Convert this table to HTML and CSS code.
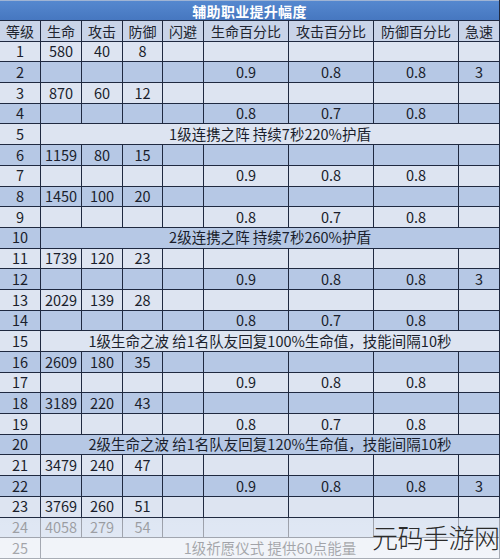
FILE: index.html
```html
<!DOCTYPE html>
<html lang="zh-CN">
<head>
<meta charset="utf-8">
<title>辅助职业提升幅度</title>
<link rel="stylesheet" href="styles.css">
</head>
<body>
<div class="page">
  <div class="sheet">
    <div class="title">辅助职业提升幅度</div>
    <div class="row hd"><div class="c">等级</div><div class="c">生命</div><div class="c">攻击</div><div class="c">防御</div><div class="c">闪避</div><div class="c">生命百分比</div><div class="c">攻击百分比</div><div class="c">防御百分比</div><div class="c">急速</div></div>
    <div class="row l"><div class="c">1</div><div class="c">580</div><div class="c">40</div><div class="c">8</div><div class="c"></div><div class="c"></div><div class="c"></div><div class="c"></div><div class="c"></div></div>
    <div class="row d"><div class="c">2</div><div class="c"></div><div class="c"></div><div class="c"></div><div class="c"></div><div class="c">0.9</div><div class="c">0.8</div><div class="c">0.8</div><div class="c">3</div></div>
    <div class="row l"><div class="c">3</div><div class="c">870</div><div class="c">60</div><div class="c">12</div><div class="c"></div><div class="c"></div><div class="c"></div><div class="c"></div><div class="c"></div></div>
    <div class="row d"><div class="c">4</div><div class="c"></div><div class="c"></div><div class="c"></div><div class="c"></div><div class="c">0.8</div><div class="c">0.7</div><div class="c">0.8</div><div class="c"></div></div>
    <div class="row l"><div class="c">5</div><div class="c span">1级连携之阵 持续7秒220%护盾</div></div>
    <div class="row d"><div class="c">6</div><div class="c">1159</div><div class="c">80</div><div class="c">15</div><div class="c"></div><div class="c"></div><div class="c"></div><div class="c"></div><div class="c"></div></div>
    <div class="row l"><div class="c">7</div><div class="c"></div><div class="c"></div><div class="c"></div><div class="c"></div><div class="c">0.9</div><div class="c">0.8</div><div class="c">0.8</div><div class="c"></div></div>
    <div class="row d"><div class="c">8</div><div class="c">1450</div><div class="c">100</div><div class="c">20</div><div class="c"></div><div class="c"></div><div class="c"></div><div class="c"></div><div class="c"></div></div>
    <div class="row l"><div class="c">9</div><div class="c"></div><div class="c"></div><div class="c"></div><div class="c"></div><div class="c">0.8</div><div class="c">0.7</div><div class="c">0.8</div><div class="c"></div></div>
    <div class="row d"><div class="c">10</div><div class="c span">2级连携之阵 持续7秒260%护盾</div></div>
    <div class="row l"><div class="c">11</div><div class="c">1739</div><div class="c">120</div><div class="c">23</div><div class="c"></div><div class="c"></div><div class="c"></div><div class="c"></div><div class="c"></div></div>
    <div class="row d"><div class="c">12</div><div class="c"></div><div class="c"></div><div class="c"></div><div class="c"></div><div class="c">0.9</div><div class="c">0.8</div><div class="c">0.8</div><div class="c">3</div></div>
    <div class="row l"><div class="c">13</div><div class="c">2029</div><div class="c">139</div><div class="c">28</div><div class="c"></div><div class="c"></div><div class="c"></div><div class="c"></div><div class="c"></div></div>
    <div class="row d"><div class="c">14</div><div class="c"></div><div class="c"></div><div class="c"></div><div class="c"></div><div class="c">0.8</div><div class="c">0.7</div><div class="c">0.8</div><div class="c"></div></div>
    <div class="row l"><div class="c">15</div><div class="c span">1级生命之波 给1名队友回复100%生命值，技能间隔10秒</div></div>
    <div class="row d"><div class="c">16</div><div class="c">2609</div><div class="c">180</div><div class="c">35</div><div class="c"></div><div class="c"></div><div class="c"></div><div class="c"></div><div class="c"></div></div>
    <div class="row l"><div class="c">17</div><div class="c"></div><div class="c"></div><div class="c"></div><div class="c"></div><div class="c">0.9</div><div class="c">0.8</div><div class="c">0.8</div><div class="c"></div></div>
    <div class="row d"><div class="c">18</div><div class="c">3189</div><div class="c">220</div><div class="c">43</div><div class="c"></div><div class="c"></div><div class="c"></div><div class="c"></div><div class="c"></div></div>
    <div class="row l"><div class="c">19</div><div class="c"></div><div class="c"></div><div class="c"></div><div class="c"></div><div class="c">0.8</div><div class="c">0.7</div><div class="c">0.8</div><div class="c"></div></div>
    <div class="row d"><div class="c">20</div><div class="c span">2级生命之波 给1名队友回复120%生命值，技能间隔10秒</div></div>
    <div class="row l"><div class="c">21</div><div class="c">3479</div><div class="c">240</div><div class="c">47</div><div class="c"></div><div class="c"></div><div class="c"></div><div class="c"></div><div class="c"></div></div>
    <div class="row d"><div class="c">22</div><div class="c"></div><div class="c"></div><div class="c"></div><div class="c"></div><div class="c">0.9</div><div class="c">0.8</div><div class="c">0.8</div><div class="c">3</div></div>
    <div class="row l"><div class="c">23</div><div class="c">3769</div><div class="c">260</div><div class="c">51</div><div class="c"></div><div class="c"></div><div class="c"></div><div class="c"></div><div class="c"></div></div>
    <div class="row d"><div class="c">24</div><div class="c">4058</div><div class="c">279</div><div class="c">54</div><div class="c"></div><div class="c"></div><div class="c"></div><div class="c"></div><div class="c"></div></div>
    <div class="row l"><div class="c">25</div><div class="c span">1级祈愿仪式 提供60点能量</div></div>
  </div>
  <div class="fade"></div>
  <div class="mark">元码手游网</div>
</div>
</body>
</html>
```

FILE: styles.css
```css
html, body {
  margin: 0;
  padding: 0;
  background: #ffffff;
}

.page {
  position: relative;
  width: 500px;
  height: 560px;
  overflow: hidden;
  font-family: "Noto Sans CJK SC", "Noto Sans", sans-serif;
}

.sheet {
  display: grid;
  grid-template-columns: 40px 40px 40px 39px 40px 84px 84px 84px 40px;
  grid-template-rows: 20px repeat(26, 19.7px);
  column-gap: 1px;
  row-gap: 1px;
  padding-right: 1px;
  padding-bottom: 1px;
  background: #1f2940;
  width: 499px;
}

.title {
  grid-column: 1 / -1;
  background: linear-gradient(#5588cf, #4677c0);
  border-top: 1px solid #9fb4d4;
  color: #ffffff;
  font-weight: 700;
  font-size: 14px;
  display: flex;
  align-items: center;
  justify-content: center;
  letter-spacing: 0.3px;
}

.row {
  display: contents;
}

.c {
  display: flex;
  align-items: center;
  justify-content: center;
  font-size: 14.5px;
  color: #1a1e2c;
  white-space: nowrap;
  line-height: 1;
}

.span {
  grid-column: 2 / -1;
}

.hd .c {
  background: #c9d4e8;
  font-size: 14px;
  color: #20242f;
}

.l .c {
  background: #dde4f1;
}

.d .c {
  background: #b6c8e5;
}

.fade {
  position: absolute;
  left: 0;
  right: 0;
  top: 518px;
  bottom: 0;
  background: linear-gradient(rgba(255, 255, 255, 0.55), rgba(255, 255, 255, 0.62));
}

.mark {
  position: absolute;
  left: 372px;
  top: 519px;
  font-size: 26px;
  line-height: 36px;
  color: #2b2b2b;
  font-weight: 300;
  letter-spacing: -0.5px;
  white-space: nowrap;
}
```
